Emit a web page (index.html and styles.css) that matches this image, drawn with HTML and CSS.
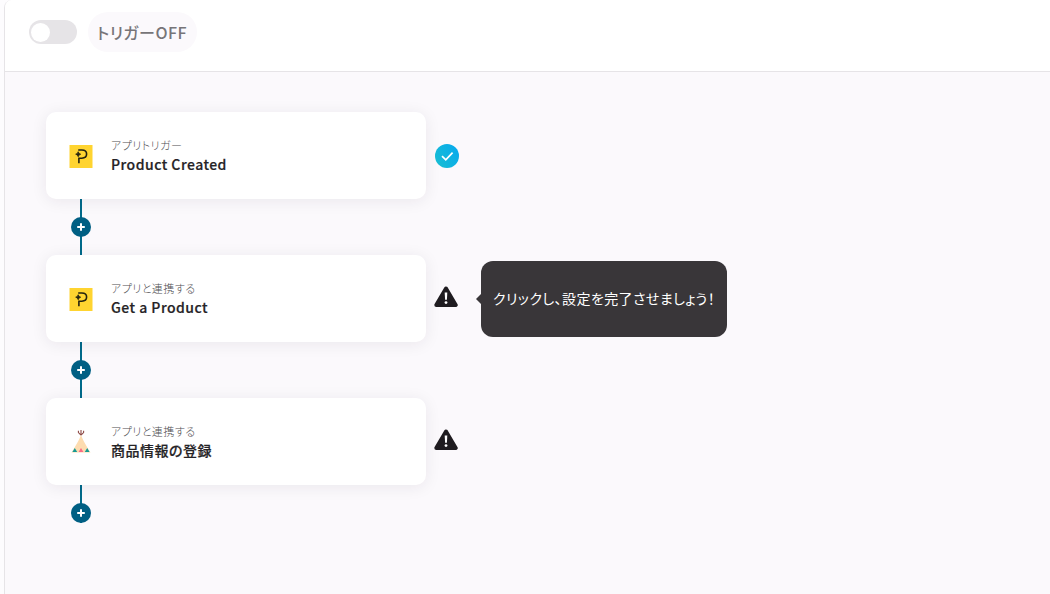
FILE: index.html
```html
<!DOCTYPE html>
<html lang="ja">
<head>
  <meta charset="UTF-8">
  <meta name="viewport" content="width=device-width, initial-scale=1.0">
  <title>フローボット</title>
  <link rel="stylesheet" href="styles.css">
</head>
<body>
  <svg width="0" height="0" class="sprite">
    <symbol id="icon-paddle" viewBox="0 0 23 23">
      <rect width="23" height="23" fill="#ffd430"/>
      <path d="M8.7 5H12.3C15.2 5 17.1 6.6 17.1 9.1S15.2 13.2 12.3 13.2H9.4V18.3" fill="none" stroke="#25230f" stroke-width="1.6"/>
      <path d="M8.7 6.7Q9.1 8.8 11.2 9.2Q9.1 9.6 8.7 11.7Q8.3 9.6 6.2 9.2Q8.3 8.8 8.7 6.7Z" fill="#25230f" stroke="#25230f" stroke-width=".8"/>
    </symbol>
    <symbol id="icon-tent" viewBox="0 0 24 26">
      <path d="M12 6.5C13.5 12 17.8 18.5 21.5 24.5H2.5C6.2 18.5 10.5 12 12 6.5Z" fill="#fddcb0"/>
      <path d="M12 7.2L9.4 4.6V2.8M12 7.2L14.6 4.6V2.8M12 7.2V2" fill="none" stroke="#8f4c48" stroke-width="1.1"/>
      <path d="M3.4 24L5.8 20L8.2 24ZM15.8 24L18.2 20L20.6 24Z" fill="#169a94"/>
      <path d="M9.6 24L12 20L14.4 24Z" fill="#fb6b86"/>
    </symbol>
    <symbol id="icon-warning" viewBox="0 0 24 22">
      <path d="M12 2.5L21.7 19H2.3Z" fill="#1f1c20" stroke="#1f1c20" stroke-width="4" stroke-linejoin="round"/>
      <path d="M10.7 6.5H13.3L12.9 13.8H11.1Z" fill="#fff"/>
      <circle cx="12" cy="16.6" r="1.4" fill="#fff"/>
    </symbol>
    <symbol id="icon-plus" viewBox="0 0 20 20">
      <path d="M10 6.2V13.8M6.2 10H13.8" stroke="#fff" stroke-width="2"/>
    </symbol>
  </svg>

  <div class="panel">
    <header class="header">
      <button class="toggle" aria-label="トリガー"><span class="toggle-knob"></span></button>
      <span class="toggle-label">トリガーOFF</span>
    </header>

    <main class="flow">
      <div class="step">
        <div class="card">
          <svg class="app-icon"><use href="#icon-paddle"/></svg>
          <div class="card-text">
            <p class="card-type">アプリトリガー</p>
            <p class="card-title">Product Created</p>
          </div>
        </div>
        <div class="status status-done">
          <svg width="24" height="24" viewBox="0 0 24 24"><path d="M7 12.1L10.8 15.8L17.6 8.6" fill="none" stroke="#fff" stroke-width="1.7"/></svg>
        </div>
      </div>
      <div class="connector">
        <button class="add" aria-label="追加"><svg width="20" height="20"><use href="#icon-plus"/></svg></button>
      </div>

      <div class="step">
        <div class="card">
          <svg class="app-icon"><use href="#icon-paddle"/></svg>
          <div class="card-text">
            <p class="card-type">アプリと連携する</p>
            <p class="card-title">Get a Product</p>
          </div>
        </div>
        <div class="status status-warning">
          <svg width="24" height="22"><use href="#icon-warning"/></svg>
          <div class="tooltip">クリックし、設定を完了させましょう！</div>
        </div>
      </div>
      <div class="connector">
        <button class="add" aria-label="追加"><svg width="20" height="20"><use href="#icon-plus"/></svg></button>
      </div>

      <div class="step">
        <div class="card">
          <svg class="app-icon tent"><use href="#icon-tent"/></svg>
          <div class="card-text">
            <p class="card-type">アプリと連携する</p>
            <p class="card-title">商品情報の登録</p>
          </div>
        </div>
        <div class="status status-warning">
          <svg width="24" height="22"><use href="#icon-warning"/></svg>
        </div>
      </div>
      <div class="connector connector-last">
        <button class="add" aria-label="追加"><svg width="20" height="20"><use href="#icon-plus"/></svg></button>
      </div>
    </main>
  </div>
</body>
</html>
```
FILE: styles.css
```css
* {
  box-sizing: border-box;
}
body {
  margin: 0;
  height: 100vh;
  overflow: hidden;
  background-color: #fdfcfe;
  color: #252326;
  font-family: "Noto Sans CJK JP", sans-serif;
  font-feature-settings: "palt";
}
p {
  margin: 0;
}
svg {
  display: block;
}
button {
  border: 0;
  padding: 0;
}
.sprite {
  position: absolute;
}
.panel {
  display: flex;
  flex-direction: column;
  height: 100vh;
  margin-left: 4px;
  border-left: 1px solid #e6e4e7;
  border-top-left-radius: 8px;
  background-color: #fbf9fc;
  overflow: hidden;
}
.header {
  display: flex;
  align-items: center;
  gap: 11px;
  height: 72px;
  padding: 0 24px 7px;
  border-bottom: 1px solid #e6e4e7;
  background-color: #fff;
}
.toggle {
  width: 48px;
  height: 24px;
  padding: 2px;
  border-radius: 12px;
  background-color: #e6e4e7;
}
.toggle-knob {
  display: block;
  width: 19px;
  height: 19px;
  border-radius: 50%;
  background-color: #fff;
}
.toggle-label {
  height: 40px;
  padding: 0 10px 0 9px;
  border-radius: 20px;
  background-color: #fbf9fc;
  color: #777578;
  font-size: 16px;
  font-weight: 500;
  line-height: 40px;
  letter-spacing: 0.5px;
}
.flow {
  padding: 40px 41px;
}
.step {
  display: flex;
  align-items: center;
  gap: 8px;
}
.card {
  display: flex;
  align-items: center;
  gap: 18px;
  width: 380px;
  height: 87px;
  padding: 0 23px;
  border-radius: 10px;
  background-color: #fff;
  box-shadow: 0 2px 16px rgba(40, 30, 50, 0.08);
}
.app-icon {
  width: 24px;
  height: 23px;
  margin-top: 2px;
}
.tent {
  height: 26px;
  margin-top: 0;
  margin-bottom: 1px;
}
.card-type {
  color: #504e52;
  font-size: 11px;
  font-weight: 300;
  line-height: 17px;
  letter-spacing: 0.45px;
}
.card-title {
  font-size: 14px;
  font-weight: 500;
  line-height: 21px;
  letter-spacing: 0.48px;
  -webkit-text-stroke: 0.2px #252326;
}
.status {
  position: relative;
  width: 24px;
}
.status-done {
  height: 24px;
  margin-left: 1px;
  border-radius: 50%;
  background: linear-gradient(60deg, #19bfd0, #06a8f0);
}
.status-warning {
  margin-bottom: 4px;
}
.tooltip {
  position: absolute;
  top: -25px;
  left: 47px;
  width: 246px;
  height: 76px;
  padding-left: 12px;
  border-radius: 12px;
  background-color: #393639;
  color: #fff;
  font-size: 14px;
  line-height: 74px;
  letter-spacing: 0.42px;
  white-space: nowrap;
}
.tooltip::before {
  content: "";
  position: absolute;
  top: 33px;
  left: -5px;
  border: solid transparent;
  border-width: 5px 5px 5px 0;
  border-right-color: #393639;
}
.connector {
  display: flex;
  align-items: center;
  justify-content: center;
  width: 20px;
  height: 56px;
  margin-left: 25px;
  background: linear-gradient(#006a8a, #006a8a) center / 2px 100% no-repeat;
}
.connector-last {
  align-items: flex-end;
  height: 38px;
}
.add {
  width: 20px;
  height: 20px;
  border-radius: 50%;
  background-color: #005f83;
}
```
